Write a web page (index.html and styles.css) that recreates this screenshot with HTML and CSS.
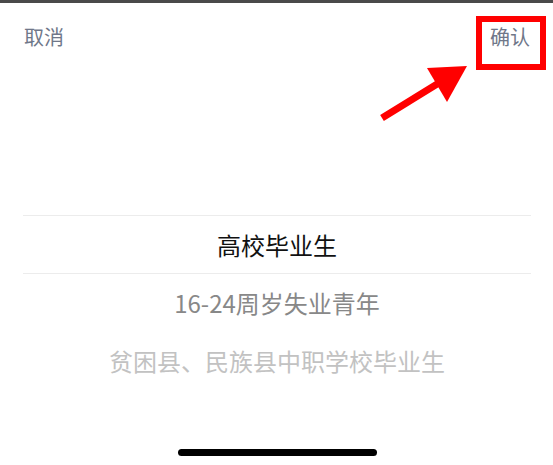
FILE: index.html
```html
<!DOCTYPE html>
<html lang="zh-CN">
<head>
    <meta charset="UTF-8">
    <meta name="viewport" content="width=device-width, initial-scale=1.0">
    <title>选择人员类别</title>
    <link rel="stylesheet" href="styles.css">
</head>
<body>
    <div class="status-strip"></div>

    <div class="toolbar">
        <span class="toolbar-btn">取消</span>
        <span class="toolbar-btn confirm">确认</span>
        <!-- annotation over the confirm button -->
        <div class="mark-box"></div>
        <svg class="mark-arrow" width="110" height="80" viewBox="0 0 110 80">
            <line x1="12" y1="68" x2="72" y2="31" stroke="#ff0000" stroke-width="7"/>
            <polygon points="57,18 97,16 77,52" fill="#ff0000"/>
        </svg>
    </div>

    <div class="picker">
        <div class="picker-item selected">高校毕业生</div>
        <div class="picker-item near">16-24周岁失业青年</div>
        <div class="picker-item far">贫困县、民族县中职学校毕业生</div>
    </div>

    <div class="home-bar"></div>
</body>
</html>
```
FILE: styles.css
```css
body {
    margin: 0;
    background-color: #fff;
    font-family: "Noto Sans CJK SC", "Noto Sans", sans-serif;
    width: 553px;
    height: 465px;
    overflow: hidden;
    position: relative;
}
.status-strip {
    height: 3px;
    background-color: #4a4a4a;
}
.toolbar {
    position: relative;
    display: flex;
    justify-content: space-between;
    padding: 22px 23px 0 24px;
    height: 40px;
}
.toolbar-btn {
    font-size: 20px;
    line-height: 24px;
    color: #6f7789;
}
.mark-box {
    position: absolute;
    left: 476px;
    top: 13px;
    width: 70px;
    height: 54px;
    box-sizing: border-box;
    border: 6px solid #ff0000;
}
.mark-arrow {
    position: absolute;
    left: 370px;
    top: 47px;
}
.picker {
    margin: 150px 22px 0 23px;
}
.picker-item {
    height: 58px;
    line-height: 58px;
    text-align: center;
    font-size: 24px;
    white-space: nowrap;
}
.selected {
    color: #111;
    border-top: 1px solid #ececec;
    border-bottom: 1px solid #ececec;
    height: 57px;
    line-height: 57px;
}
.near {
    color: #888;
}
.far {
    color: #c2c2c2;
}
.home-bar {
    position: absolute;
    left: 178px;
    top: 449px;
    width: 199px;
    height: 7px;
    border-radius: 4px;
    background-color: #000;
}
```
